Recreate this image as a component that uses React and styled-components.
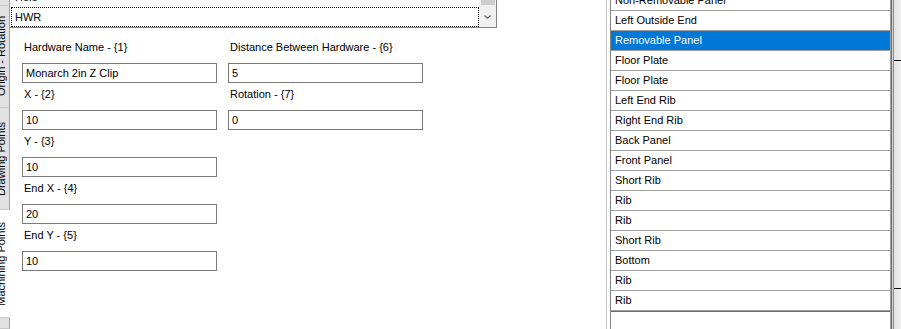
import React from 'react';
import styled, { createGlobalStyle } from 'styled-components';

const Global = createGlobalStyle`
  html, body { margin: 0; padding: 0; background: #fff; }
  body {
    font-family: "Liberation Sans", Arial, sans-serif;
    font-size: 11px;
    color: #000;
  }
  * { box-sizing: border-box; }
`;

const Window = styled.div`
  width: 901px;
  height: 329px;
  display: flex;
  overflow: hidden;
  background: #fff;
`;

/* ---------- vertical tab strip ---------- */
const TabStrip = styled.div`
  width: 10px;
  flex: none;
  display: flex;
  flex-direction: column;
`;

const TabFiller = styled.div`
  flex: ${p => (p.$grow ? '1' : 'none')};
  height: ${p => (p.$h ? `${p.$h}px` : 'auto')};
  background: #e1e1e1;
  border-right: 1px solid #a0a0a0;
  border-bottom: 1px solid #c8c8c8;
`;

const Tab = styled.div`
  flex: none;
  height: ${p => p.$h}px;
  display: flex;
  align-items: center;
  overflow: hidden;
  background: ${p => (p.$active ? '#fff' : '#e1e1e1')};
  border-right: 1px solid ${p => (p.$active ? '#fff' : '#a0a0a0')};
  border-bottom: 1px solid #c8c8c8;
`;

const TabLabel = styled.span`
  flex: none;
  writing-mode: vertical-rl;
  transform: rotate(180deg);
  line-height: 13px;
  white-space: nowrap;
  margin-left: -5px;
`;

/* ---------- main page ---------- */
const Main = styled.div`
  width: 596px;
  flex: none;
  display: flex;
  flex-direction: column;
`;

const ListBox = styled.div`
  width: 487px;
  height: 28px;
  flex: none;
  display: flex;
  border-right: 1px solid #828282;
  border-bottom: 1px solid #828282;
`;

const ListItems = styled.div`
  flex: 1;
  display: flex;
  flex-direction: column;
  justify-content: flex-end;
  overflow: hidden;
`;

const ListItem = styled.div`
  flex: none;
  height: 20px;
  margin-left: 1px;
  padding-left: 3px;
  line-height: 18px;
  white-space: nowrap;
  border: 1px ${p => (p.$focus ? 'dotted #000' : 'solid transparent')};
`;

const ScrollBar = styled.div`
  width: 17px;
  flex: none;
  display: flex;
  flex-direction: column;
  background: #f0f0f0;
`;

const Thumb = styled.div`
  height: 5px;
  margin: 0 1px 0 2px;
  background: #cdcdcd;
`;

const ScrollArrow = styled.div`
  flex: 1;
  display: flex;
  align-items: center;
  justify-content: center;
  padding-top: 2px;
`;

const Form = styled.div`
  display: flex;
  gap: 11px;
  margin-top: 13px;
  padding-left: 12px;
`;

const FieldColumn = styled.div`
  width: 195px;
  display: flex;
  flex-direction: column;
`;

const Field = styled.div`
  display: flex;
  flex-direction: column;
  margin-bottom: 5px;
`;

const Label = styled.div`
  line-height: 13px;
  padding-left: 2px;
  margin-bottom: 9px;
  white-space: nowrap;
`;

const TextBox = styled.input`
  width: 195px;
  height: 20px;
  margin: 0;
  padding: 0 3px;
  border: 1px solid #7a7a7a;
  border-radius: 0;
  outline: none;
  background: #fff;
  font-family: inherit;
  font-size: 11px;
  color: #000;
`;

/* ---------- right list ---------- */
const RightPane = styled.div`
  flex: none;
  display: flex;
  border-left: 1px solid #c8c8c8;
  padding-left: 3px;
`;

const Grid = styled.div`
  width: 281px;
  display: flex;
  flex-direction: column;
  border-left: 1px solid #828282;
  border-right: 1px solid #a0a0a0;
`;

const GridRows = styled.div`
  height: 311px;
  flex: none;
  display: flex;
  flex-direction: column;
  justify-content: flex-end;
  overflow: hidden;
`;

const GridRow = styled.div`
  flex: none;
  height: 20px;
  padding-left: 4px;
  line-height: 19px;
  white-space: nowrap;
  border-bottom: 1px solid #a0a0a0;
  background: ${p => (p.$selected ? '#0078d7' : '#fff')};
  color: ${p => (p.$selected ? '#fff' : '#000')};
`;

const GridFoot = styled.div`
  flex: 1;
  border-top: 1px solid #6d6d6d;
`;

const EdgeStrip = styled.div`
  flex: 1;
  position: relative;
  background: linear-gradient(
    to right,
    #6d6d6d 0 1px,
    #d4d4d4 1px 2px,
    #8c8c8c 2px 3px,
    #e3e3e3 3px,
    #efefef
  );
`;

const Tick = styled.div`
  position: absolute;
  left: 3px;
  right: 0;
  top: ${p => p.$y}px;
  height: 1px;
  background: #111;
`;

const Chevron = () => (
  <svg width="7" height="4" viewBox="0 0 7 4">
    <path d="M0.5 0.5 L3.5 3.2 L6.5 0.5" fill="none" stroke="#606060" strokeWidth="1.1" />
  </svg>
);

const leftFields = [
  ['Hardware Name - {1}', 'Monarch 2in Z Clip'],
  ['X - {2}', '10'],
  ['Y - {3}', '10'],
  ['End X - {4}', '20'],
  ['End Y - {5}', '10'],
];

const rightFields = [
  ['Distance Between Hardware - {6}', '5'],
  ['Rotation - {7}', '0'],
];

const rows = [
  'Non-Removable Panel',
  'Left Outside End',
  'Removable Panel',
  'Floor Plate',
  'Floor Plate',
  'Left End Rib',
  'Right End Rib',
  'Back Panel',
  'Front Panel',
  'Short Rib',
  'Rib',
  'Rib',
  'Short Rib',
  'Bottom',
  'Rib',
  'Rib',
];

const FieldGroup = ({ items }) => (
  <FieldColumn>
    {items.map(([label, value]) => (
      <Field key={label}>
        <Label>{label}</Label>
        <TextBox readOnly value={value} />
      </Field>
    ))}
  </FieldColumn>
);

export default function App() {
  return (
    <>
      <Global />
      <Window>
        <TabStrip>
          <TabFiller $h={6} />
          <Tab $h={102}><TabLabel>Origin - Rotation</TabLabel></Tab>
          <Tab $h={102}><TabLabel>Drawing Points</TabLabel></Tab>
          <Tab $h={108} $active><TabLabel>Machining Points</TabLabel></Tab>
          <TabFiller $grow />
        </TabStrip>

        <Main>
          <ListBox>
            <ListItems>
              <ListItem>Hole</ListItem>
              <ListItem $focus>HWR</ListItem>
            </ListItems>
            <ScrollBar>
              <Thumb />
              <ScrollArrow><Chevron /></ScrollArrow>
            </ScrollBar>
          </ListBox>
          <Form>
            <FieldGroup items={leftFields} />
            <FieldGroup items={rightFields} />
          </Form>
        </Main>

        <RightPane>
          <Grid>
            <GridRows>
              {rows.map((r, i) => (
                <GridRow key={i} $selected={i === 2}>{r}</GridRow>
              ))}
            </GridRows>
            <GridFoot />
          </Grid>
        </RightPane>

        <EdgeStrip>
          <Tick $y={60} />
          <Tick $y={288} />
        </EdgeStrip>
      </Window>
    </>
  );
}
